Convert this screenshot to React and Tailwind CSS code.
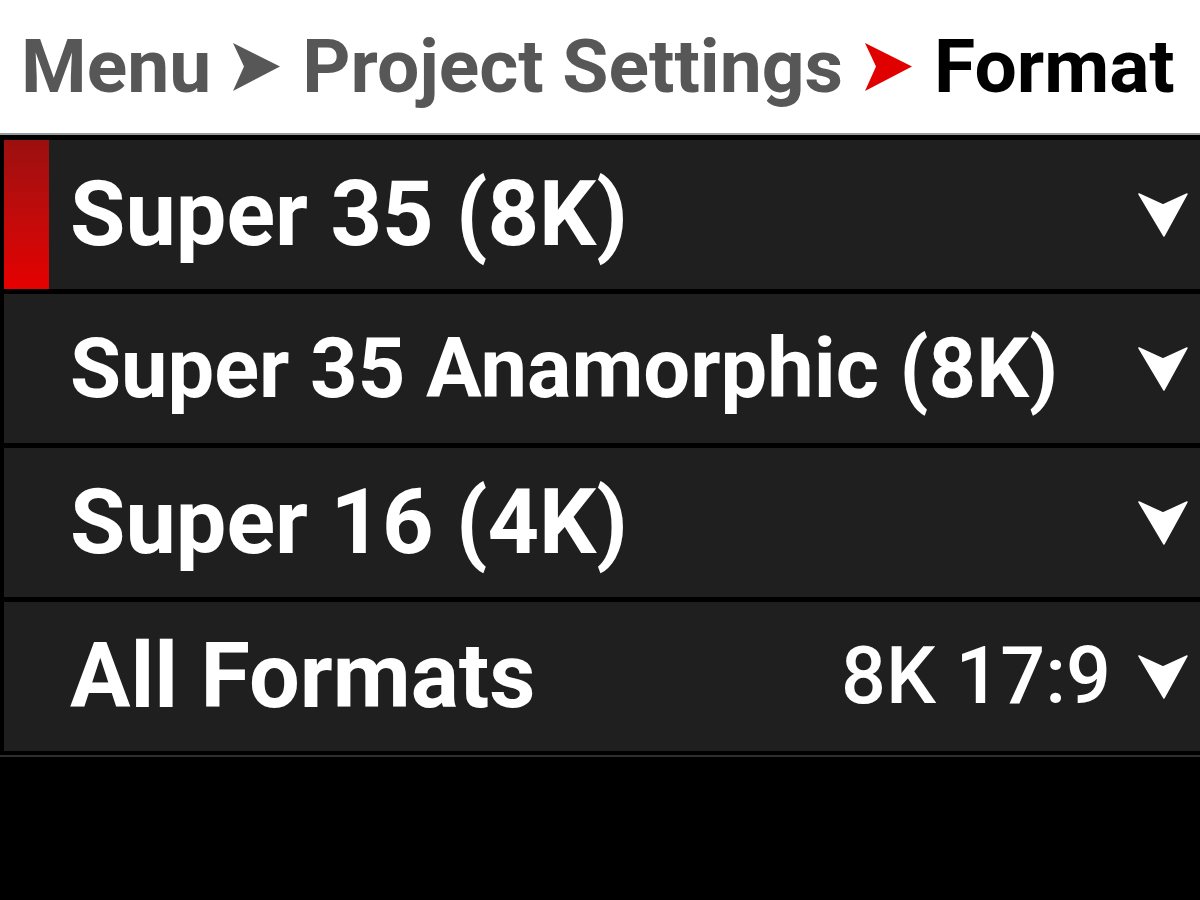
// Camera menu: Project Settings > Format
const FILAS = [
  { nombre: 'Super 35 (8K)', activa: true },
  { nombre: 'Super 35 Anamorphic (8K)', chica: true },
  { nombre: 'Super 16 (4K)' },
  { nombre: 'All Formats', valor: '8K 17:9' },
];

function FlechaMigas({ color }) {
  return (
    <svg width="47" height="48" viewBox="0 0 47 48" className="shrink-0">
      <polygon points="0,0 47,23.5 0,48 11,23.5" fill={color} />
    </svg>
  );
}

function FlechaAbajo() {
  return (
    <svg width="50" height="44" viewBox="0 0 50 44" className="shrink-0">
      <polygon points="1,1 25,12 49,1 26,43" fill="#fff" stroke="#fff" strokeWidth="1.5" strokeLinejoin="round" />
    </svg>
  );
}

function Fila({ nombre, valor, activa, chica }) {
  return (
    <div className="h-[149px] bg-[#1f1f1f] flex items-center">
      {activa ? (
        <div className="w-[45px] self-stretch bg-gradient-to-b from-[#9c0f0f] to-[#e60000] mr-[21px]" />
      ) : (
        <div className="w-[66px] shrink-0" />
      )}
      <span className={(chica ? 'text-[83px]' : 'text-[90px]') + ' flex-1 text-white font-bold leading-none whitespace-nowrap'}>
        {nombre}
      </span>
      {valor && <span className="text-white font-medium text-[79px] leading-none whitespace-nowrap mr-[27px]">{valor}</span>}
      <div className="mr-[12px]">
        <FlechaAbajo />
      </div>
    </div>
  );
}

export default function App() {
  return (
    <div className="w-[1200px] h-[900px] bg-black overflow-hidden font-['Roboto',sans-serif]">
      <header className="h-[133px] bg-white flex items-center pl-[21px] gap-[22px] text-[75px] font-bold leading-none whitespace-nowrap">
        <span className="text-[#575757]">Menu</span>
        <FlechaMigas color="#575757" />
        <span className="text-[#575757]">Project Settings</span>
        <FlechaMigas color="#e00000" />
        <span className="text-black">Format</span>
      </header>
      <div className="h-[2px] bg-[#9a9a9a]" />
      <div className="h-[5px]" />
      <div className="flex flex-col gap-[5px] pl-[4px]">
        {FILAS.map(f => <Fila key={f.nombre} {...f} />)}
      </div>
      <div className="h-[4px]" />
      <div className="h-[2px] bg-[#2e2e2e]" />
    </div>
  );
}
